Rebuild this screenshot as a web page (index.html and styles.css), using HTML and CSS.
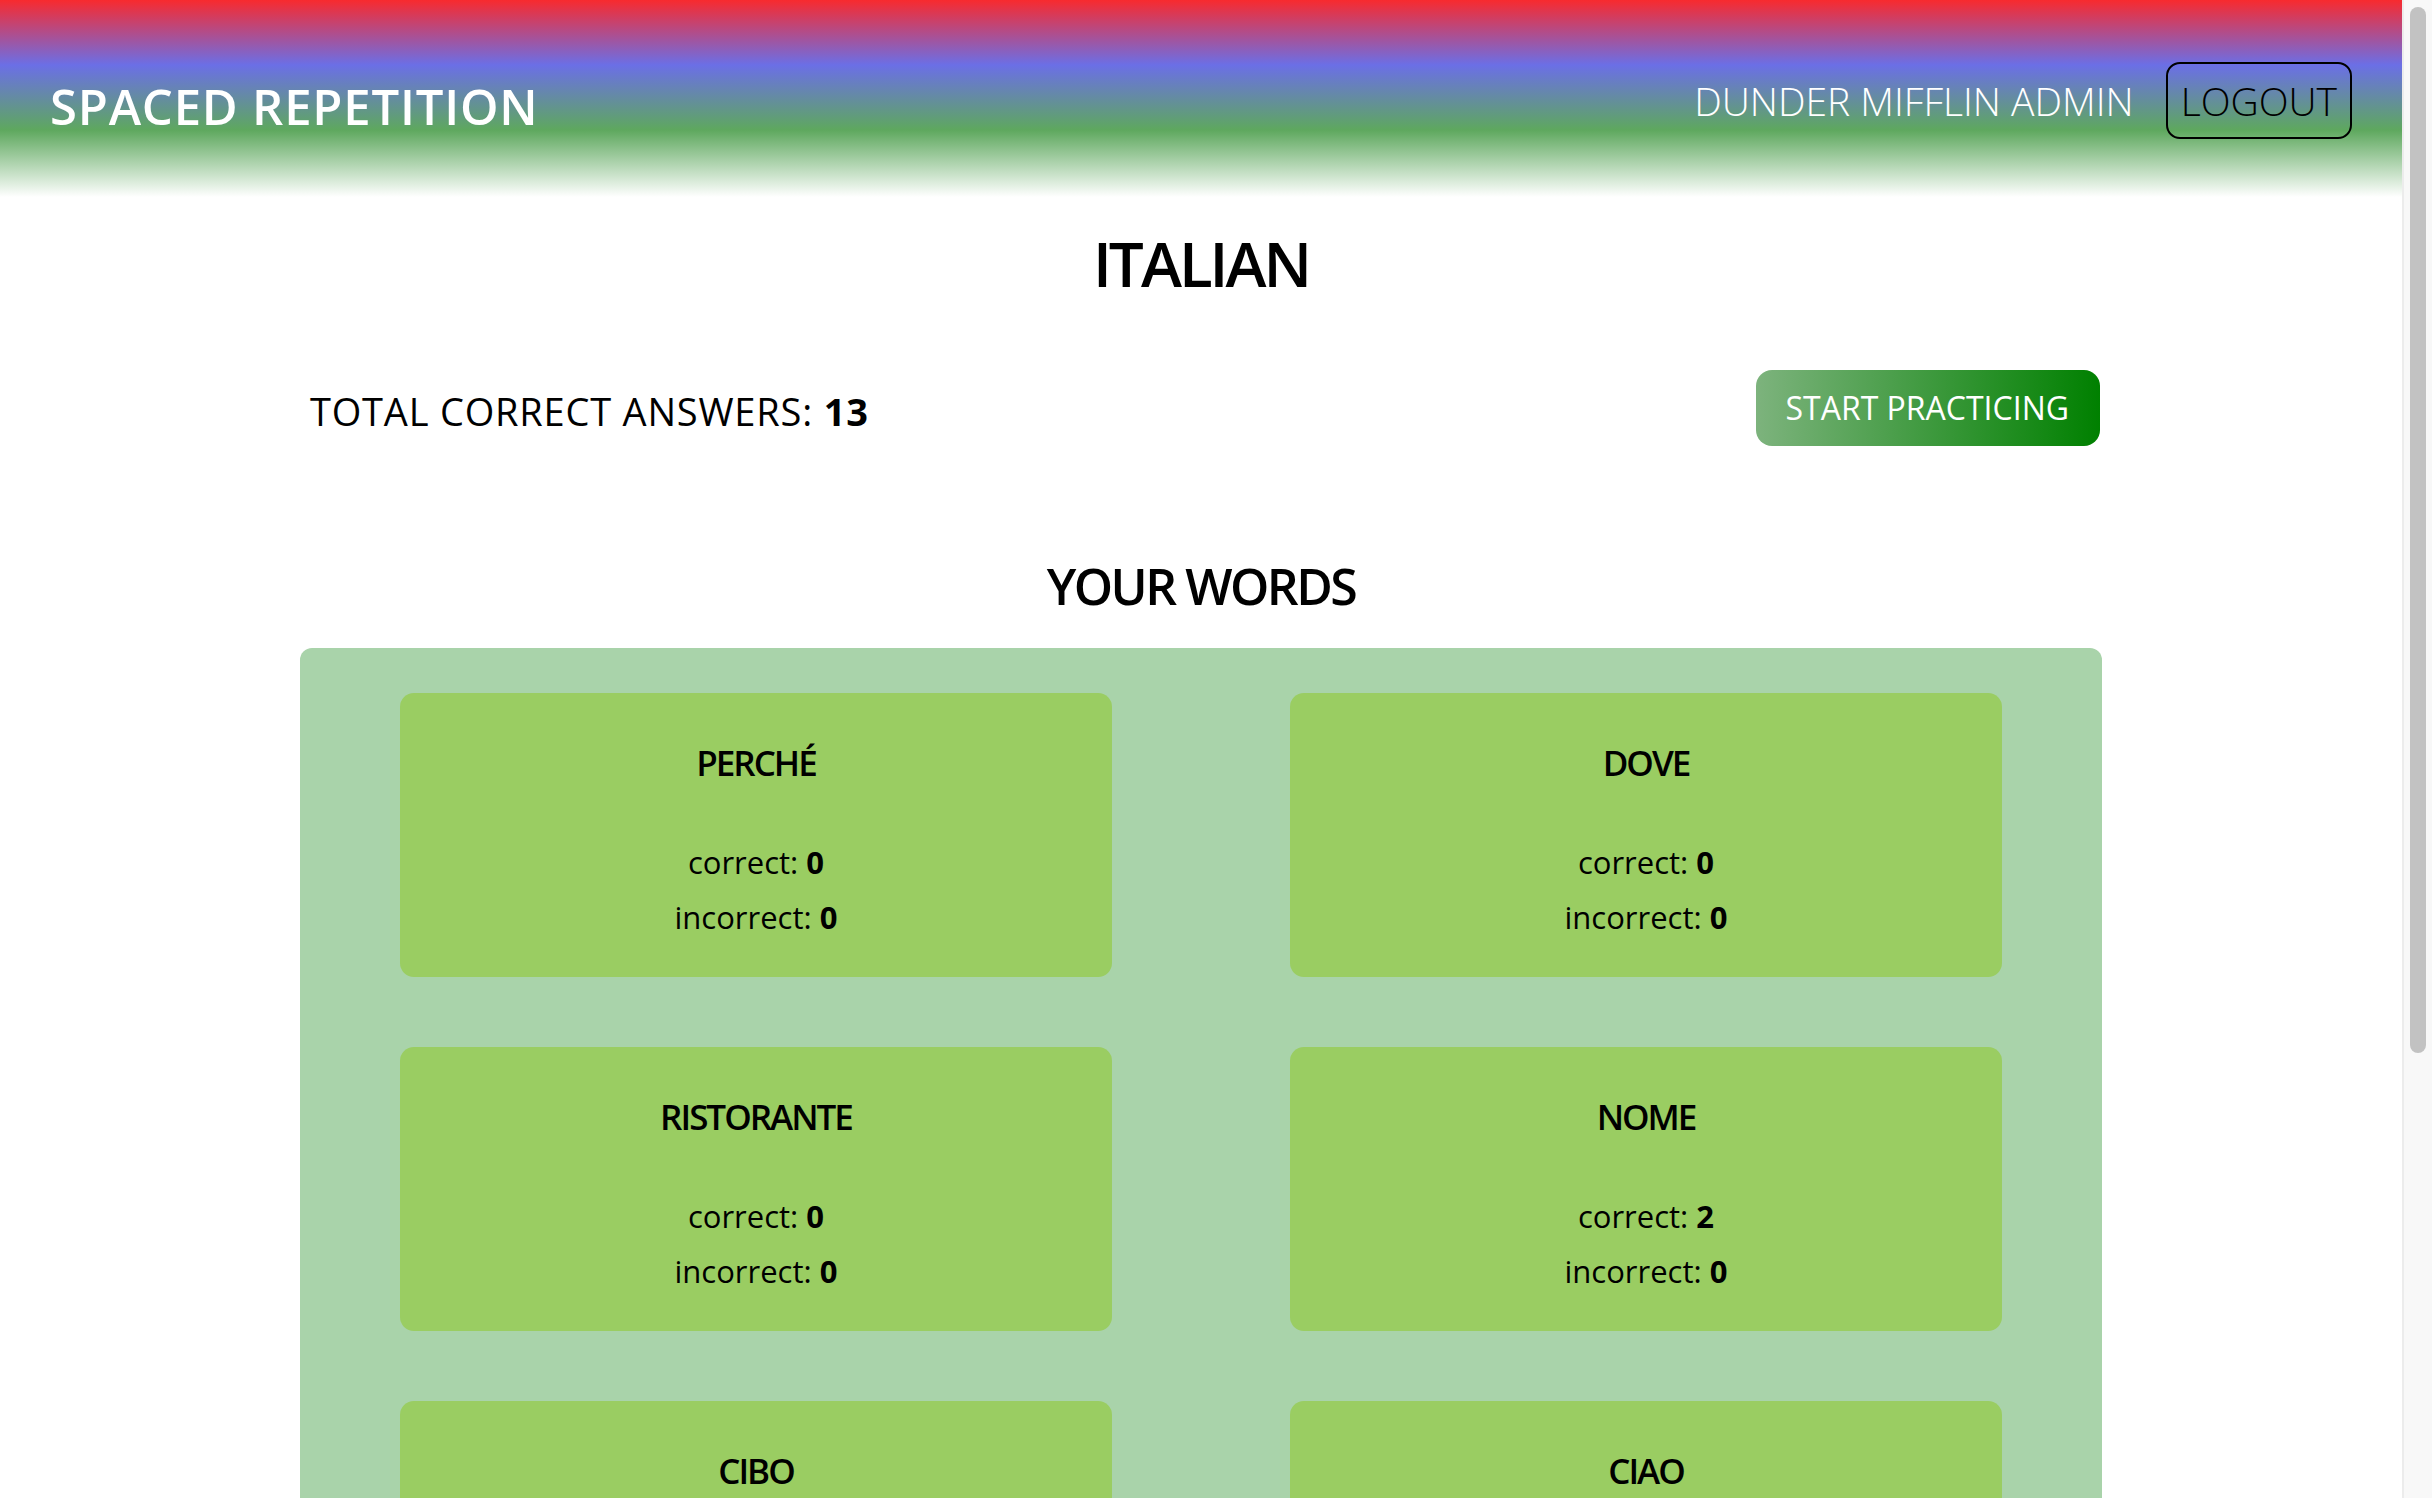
FILE: index.html
```html
<!DOCTYPE html>
<html lang="en">
<head>
<meta charset="utf-8">
<title>Spaced Repetition</title>
<link rel="stylesheet" href="styles.css">
</head>
<body>
<div class="app">
  <div class="page">
    <header class="topbar">
      <h1 class="brand">SPACED REPETITION</h1>
      <div class="user">
        <span class="user-name">DUNDER MIFFLIN ADMIN</span>
        <button class="logout">LOGOUT</button>
      </div>
    </header>
    <main class="dashboard">
      <h2 class="lang">ITALIAN</h2>
      <div class="stats">
        <p class="total">TOTAL CORRECT ANSWERS: <b>13</b></p>
        <button class="start">START PRACTICING</button>
      </div>
      <h3 class="words-title">YOUR WORDS</h3>
      <ul class="words">
        <li class="card"><h4>PERCHÉ</h4><p class="first">correct: <b>0</b></p><p>incorrect: <b>0</b></p></li>
        <li class="card"><h4>DOVE</h4><p class="first">correct: <b>0</b></p><p>incorrect: <b>0</b></p></li>
        <li class="card"><h4>RISTORANTE</h4><p class="first">correct: <b>0</b></p><p>incorrect: <b>0</b></p></li>
        <li class="card"><h4>NOME</h4><p class="first">correct: <b>2</b></p><p>incorrect: <b>0</b></p></li>
        <li class="card"><h4>CIBO</h4><p class="first">correct: <b>0</b></p><p>incorrect: <b>0</b></p></li>
        <li class="card"><h4>CIAO</h4><p class="first">correct: <b>0</b></p><p>incorrect: <b>0</b></p></li>
      </ul>
    </main>
  </div>
  <div class="scrollbar"><div class="thumb"></div></div>
</div>
</body>
</html>
```

FILE: styles.css
```css
html, body {
  margin: 0;
  padding: 0;
  height: 1498px;
  overflow: hidden;
  background: #fff;
}
body {
  font-family: "Open Sans", "Noto Sans", sans-serif;
  color: #000;
}
.app {
  display: flex;
  height: 1498px;
}
.page {
  flex: 1;
  min-width: 0;
  height: 1498px;
  overflow: hidden;
}
.scrollbar {
  flex: none;
  width: 16px;
  border-left: 2px solid #ececec;
  background: #f8f8f8;
  padding: 7px 6px 0 6px;
}
.thumb {
  width: 16px;
  height: 1046px;
  border-radius: 8px;
  background: #c2c2c2;
}

/* header */
.topbar {
  height: 197px;
  box-sizing: border-box;
  padding: 0 50px;
  display: flex;
  justify-content: space-between;
  align-items: flex-start;
  background: linear-gradient(to bottom, #f82a2e 0%, #6b6fe6 33%, #5ea85e 66%, #ffffff 100%);
}
.brand {
  margin: 76px 0 0;
  font-size: 49px;
  line-height: 60px;
  font-weight: 600;
  letter-spacing: 0.8px;
  color: #fff;
}
.user {
  margin-top: 62px;
  display: flex;
  align-items: center;
  gap: 32px;
}
.user-name {
  font-size: 39px;
  line-height: 53px;
  font-weight: 300;
  color: #fff;
}
.logout {
  font-family: inherit;
  font-size: 39px;
  line-height: 53px;
  font-weight: 300;
  color: #000;
  background: transparent;
  border: 2px solid #000;
  border-radius: 14px;
  padding: 10px 13px;
  margin: 0;
}

/* main */
.dashboard {
  width: 1802px;
  margin: 0 auto;
}
.lang {
  margin: 24px 0 0;
  text-align: center;
  font-size: 62px;
  line-height: 84px;
  font-weight: 600;
  letter-spacing: -3px;
}
.stats {
  margin-top: 65px;
  display: flex;
  justify-content: space-between;
  align-items: flex-start;
}
.total {
  margin: 15px 0 0 10px;
  font-size: 38px;
  line-height: 52px;
  font-weight: 400;
  letter-spacing: 0.8px;
}
.total b {
  font-weight: 700;
}
.start {
  font-family: inherit;
  font-size: 32px;
  line-height: 44px;
  font-weight: 400;
  color: #fff;
  border: 0;
  border-radius: 16px;
  padding: 16px 31px 16px 30px;
  margin: 0 2px 0 0;
  background: linear-gradient(to right, #7db37d, #008000);
}
.words-title {
  margin: 106px 0 0;
  text-align: center;
  font-size: 50px;
  line-height: 68px;
  font-weight: 600;
  letter-spacing: -2.5px;
}
.words {
  list-style: none;
  margin: 28px 0 0;
  padding: 45px 100px 45px;
  background: #a9d3aa;
  border-radius: 12px;
  display: grid;
  grid-template-columns: 1fr 1fr;
  gap: 70px 178px;
}
.card {
  background: #9acd62;
  border-radius: 14px;
  padding: 46px 0 32px;
  text-align: center;
}
.card h4 {
  margin: 0;
  font-size: 35px;
  line-height: 48px;
  font-weight: 600;
  letter-spacing: -2px;
}
.card p {
  margin: 0;
  font-size: 31px;
  line-height: 55px;
}
.card p.first {
  margin-top: 48px;
}
.card b {
  font-weight: 700;
}
```
